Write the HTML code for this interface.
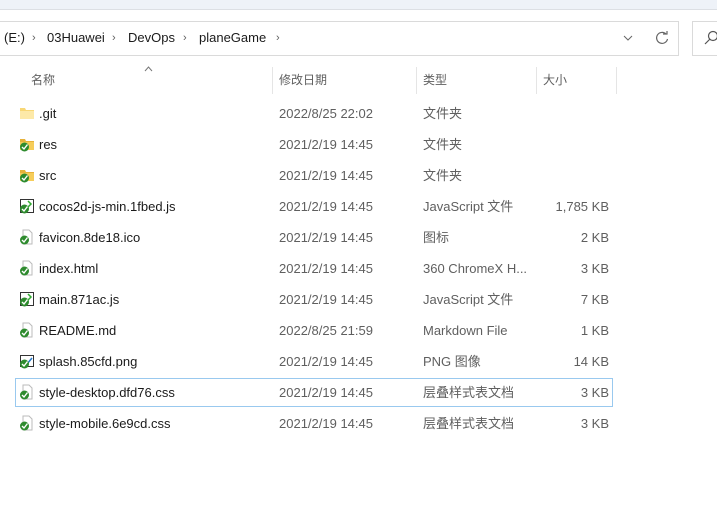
<!DOCTYPE html>
<html><head><meta charset="utf-8"><style>
*{margin:0;padding:0;box-sizing:border-box}
body{width:717px;height:507px;background:#fff;position:relative;overflow:hidden;font-family:"Liberation Sans","Noto Sans CJK SC",sans-serif;font-size:13px;color:#1a1a1a}
.a{position:absolute;white-space:nowrap;line-height:16px}
.g{color:#5f5f5f}
.sep{position:absolute;top:67px;width:1px;height:27px;background:#e5e5e5}
.ic{position:absolute;left:19px;width:16px;height:16px}
</style></head><body>
<div class="a" style="left:0;top:0;width:717px;height:10px;background:#eef2f8;border-bottom:1px solid #dcdfe4"></div>
<div class="a" style="left:-2px;top:21px;width:681px;height:35px;border:1px solid #dadada"></div>
<div class="a" style="left:692px;top:21px;width:30px;height:35px;border:1px solid #dadada"></div>
<svg class="a" style="left:704px;top:30px" width="14" height="16"><circle cx="9" cy="6" r="4.5" fill="none" stroke="#555" stroke-width="1.2"/><line x1="6" y1="9" x2="1" y2="14" stroke="#555" stroke-width="1.2"/></svg>
<div class="a" style="left:4px;top:30px">(E:)</div>
<div class="a g" style="left:32px;top:30px;font-size:11px">›</div>
<div class="a" style="left:47px;top:30px">03Huawei</div>
<div class="a g" style="left:112px;top:30px;font-size:11px">›</div>
<div class="a" style="left:128px;top:30px">DevOps</div>
<div class="a g" style="left:183px;top:30px;font-size:11px">›</div>
<div class="a" style="left:199px;top:30px">planeGame</div>
<div class="a g" style="left:276px;top:30px;font-size:11px">›</div>
<svg class="a" style="left:623px;top:35px" width="10" height="6"><path d="M1 1L5 5L9 1" fill="none" stroke="#666"/></svg>
<svg class="a" style="left:655px;top:31px" width="14" height="14"><path d="M11 3A5.5 5.5 0 1 0 12.5 8" fill="none" stroke="#666" stroke-width="1.2"/><path d="M8 3H12V0" fill="none" stroke="#666" stroke-width="1.2"/></svg>
<svg class="a" style="left:144px;top:66px" width="9" height="6"><path d="M1 5L4.5 1L8 5" fill="none" stroke="#777"/></svg>
<div class="a g" style="left:31px;top:72px;font-size:12px">名称</div>
<div class="sep" style="left:272px"></div>
<div class="a g" style="left:279px;top:72px;font-size:12px">修改日期</div>
<div class="sep" style="left:416px"></div>
<div class="a g" style="left:423px;top:72px;font-size:12px">类型</div>
<div class="sep" style="left:536px"></div>
<div class="a g" style="left:543px;top:72px;font-size:12px">大小</div>
<div class="sep" style="left:616px"></div>
<div class="a" style="left:15px;top:378px;width:598px;height:29px;border:1px solid #99c9ef"></div>
<div id="rows"></div>
<script>
var R=[[".git","2022/8/25 22:02","文件夹","","f0"],["res","2021/2/19 14:45","文件夹","","f"],["src","2021/2/19 14:45","文件夹","","f"],
["cocos2d-js-min.1fbed.js","2021/2/19 14:45","JavaScript 文件","1,785 KB","js"],["favicon.8de18.ico","2021/2/19 14:45","图标","2 KB","d"],
["index.html","2021/2/19 14:45","360 ChromeX H...","3 KB","d"],["main.871ac.js","2021/2/19 14:45","JavaScript 文件","7 KB","js"],
["README.md","2022/8/25 21:59","Markdown File","1 KB","d"],["splash.85cfd.png","2021/2/19 14:45","PNG 图像","14 KB","p"],
["style-desktop.dfd76.css","2021/2/19 14:45","层叠样式表文档","3 KB","d"],["style-mobile.6e9cd.css","2021/2/19 14:45","层叠样式表文档","3 KB","d"]];
var h="";var chk='<circle cx="5.5" cy="11" r="4.5" fill="#2e8b2e"/><path d="M3 11L5 13L8.5 8.5" fill="none" stroke="#fff" stroke-width="1.4"/>';
R.forEach(function(r,i){var c=113+i*31,y=c-7;var ic="";
if(r[4]=="f0")ic='<path d="M1 3H6L7 5H15V14H1Z" fill="#f8d775"/><path d="M1 6H15V14H1Z" fill="#fde9a8"/>';
else if(r[4]=="f")ic='<path d="M1 3H6L7 5H15V14H1Z" fill="#e7b23b"/><path d="M1 6H15V14H1Z" fill="#f6cd5a"/>'+chk;
else if(r[4]=="js")ic='<rect x="1.5" y="1.5" width="13" height="13" fill="#fff" stroke="#333"/><path d="M9 3L12 6L8 10" fill="none" stroke="#3a3" stroke-width="1.5"/>'+chk;
else if(r[4]=="p")ic='<rect x="1.5" y="2.5" width="13" height="11" fill="#fff" stroke="#333"/><path d="M8 11L13 5" stroke="#27c" stroke-width="1.5"/>'+chk;
else ic='<path d="M4 1H10L13 4V15H4Z" fill="#fff" stroke="#bbb"/>'+chk;
h+='<svg class="ic" style="top:'+(c-8)+'px" viewBox="0 0 16 16">'+ic+'</svg>';
h+='<div class="a" style="left:39px;top:'+y+'px">'+r[0]+'</div>';
h+='<div class="a g" style="left:279px;top:'+y+'px">'+r[1]+'</div>';
h+='<div class="a g" style="left:423px;top:'+y+'px">'+r[2]+'</div>';
h+='<div class="a g" style="right:108px;top:'+y+'px">'+r[3]+'</div>';});
document.getElementById("rows").innerHTML=h;
</script>
</body></html>
